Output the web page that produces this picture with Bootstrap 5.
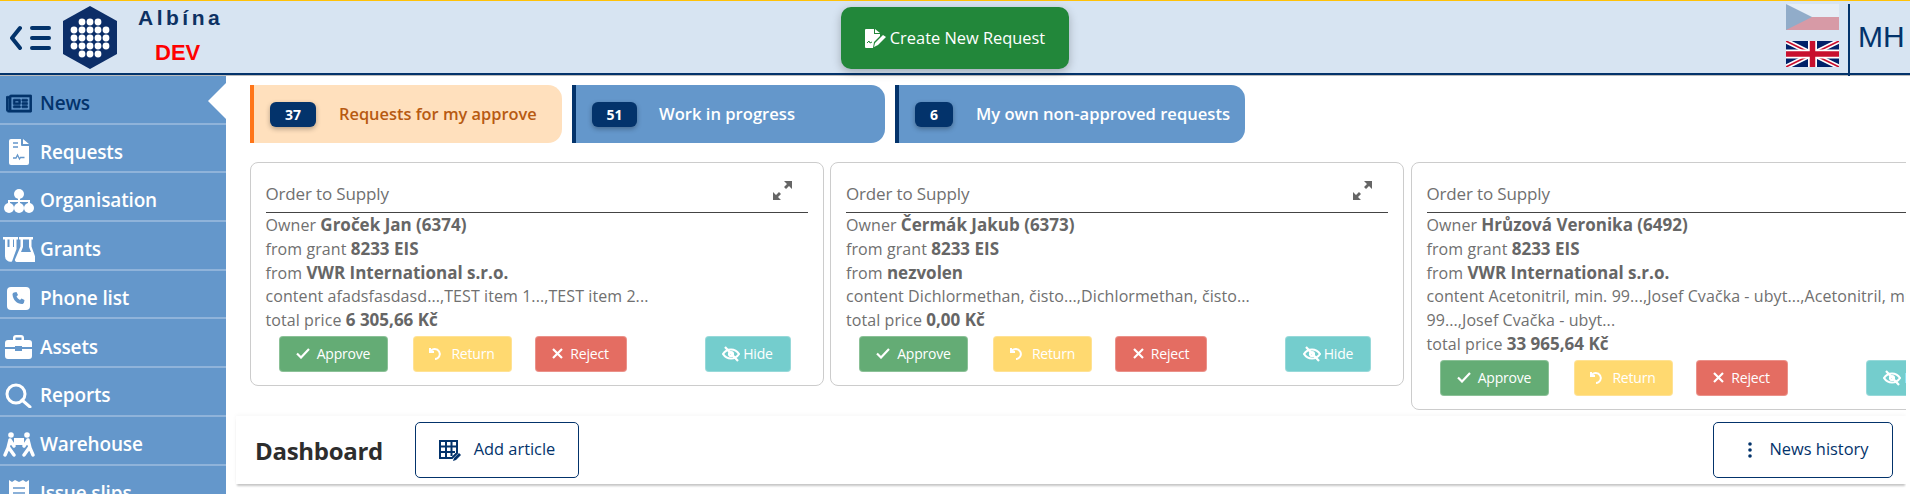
<!DOCTYPE html>
<html lang="en"><head><meta charset="utf-8"><title>Albina</title>
<link rel="stylesheet" href="https://cdn.jsdelivr.net/npm/bootstrap@5.3.0/dist/css/bootstrap.min.css">
<style>
html,body{height:494px;overflow:hidden;background:#fff}
body{font-family:"Open Sans","Noto Sans",sans-serif;font-size:16px;color:#707070}
.topbar{height:76px;background:#d7e4f2;border-top:1px solid #ffc107;border-bottom:1px solid #bbb;box-shadow:inset 0 -2px 0 #03336b;flex:none}
.leftzone{padding-left:10px}
.logo-hex{width:56px;height:64px;margin-left:11px;margin-top:-1px}
.burger{width:41px;height:26px}
.brand-wrap{margin-left:20px;width:100px;height:66px;margin-top:-4px}
.brand-name{font:700 21px/24px "Liberation Sans",sans-serif;letter-spacing:3.5px;color:#0d3163;margin-top:3px}
.brand-dev{font:700 22px/28px "Liberation Sans",sans-serif;color:#f00;padding-left:17px;margin-top:9px}
.create-btn{width:228px;height:62px;margin-left:603px;margin-top:-1px;padding-top:8px;background:#22873a;color:#fff;border-radius:10px;border:0;font-size:16.4px;letter-spacing:0;box-shadow:0 3px 10px rgba(0,0,0,.25)}
.create-btn:hover{background:#22873a;color:#fff}
.flags{width:53px;margin-right:9px;gap:11px;margin-top:3px}
.flags svg{display:block;width:53px;height:26px}
.flag-cz{opacity:.35}
.user-tag{width:62px;height:72px;border-left:2px solid #03336b;margin-top:3px;padding-left:8px;font:30px/65px "Liberation Sans",sans-serif;color:#03336b}
.sidebar{width:226px;background:#6497cb;flex:none}
.side-item{height:48.7px;border-bottom:2px solid #8fb3da;color:#fff;font-weight:600;font-size:19px;letter-spacing:-.15px;position:relative;padding-top:8px}
.side-item.is-on{color:#03336b}
.side-item.is-on::after{content:"";position:absolute;right:0;top:7px;border-style:solid;border-width:18px 18px 18px 0;border-color:transparent #fff transparent transparent}
.side-ico{width:40px;flex:none;display:flex;justify-content:center;padding-right:3px}
.main-area{width:1680px;flex:none;overflow:hidden}
.tabs-row{gap:10px;padding:9px 0 0 24px}
.tab-box{height:58px;border-left:4px solid #03336b;background:#6497cb;color:#fff;font-weight:600;font-size:16.6px;border-radius:0 14px 14px 0}
.tab-box.tab-a{width:312px;background:#ffe0bd;border-left-color:#ff7518;color:#b75a12;font-size:16.4px}
.tab-b{width:313px}.tab-c{width:350px}
.count-pill{width:46px;height:25px;margin:0 23px 0 16px;background:#03336b;color:#fff;border-radius:6px;font-size:14px;font-weight:700;box-shadow:0 2px 5px rgba(0,0,0,.3)}
.tab-b .count-pill{width:45px;margin-right:22px}
.tab-c .count-pill{width:38px;margin-right:23px}
.cards-row{gap:6.5px;padding:19px 0 0 23.5px;align-items:flex-start;width:1680px}
.order-box{width:574px;flex:none;background:#fff;border:1px solid #ccc;border-radius:8px;padding:15px 15px 13px;font-size:16px;line-height:23.8px;letter-spacing:.08px;position:relative}
.order-head{height:35px;border-bottom:1px solid #444;font-size:17px;padding-top:3px;line-height:26px;margin-bottom:1px;letter-spacing:-.15px}
.order-box b{color:#666;font-weight:700;font-size:17px;letter-spacing:0;line-height:1}
.btn-strip{margin:3px 17px 0 13px;height:36px}
.act{height:36px;border-radius:4px;color:#fff;font-size:14px;letter-spacing:-.2px;border:1px solid rgba(255,255,255,.25);gap:7px}
.act-ok{width:109px;background:#64ac75}.act-back{width:99px;background:#ffd970;margin-left:25px;gap:9px}.act-no{width:92px;background:#e46d62;margin-left:23px}.act-hide{width:86px;background:#74cdcd;margin-left:auto;gap:3px}
.dash-panel{height:68px;margin:6px 0 0 10px;padding:0 13px 0 19px;background:#fff;box-shadow:0 3px 2px -1px rgba(0,0,0,.22),0 -1px 4px rgba(0,0,0,.04)}
.dash-title{font-weight:700;font-size:24px;color:#2d2d2d;letter-spacing:-.3px;width:160px;padding-top:3px}
.line-btn{height:56px;background:#fff;border:1px solid #03336b;border-radius:5px;color:#03336b;font-size:16.4px}
.line-a{width:164px;gap:13px}.line-b{width:180px;gap:18px;padding-left:22px}
</style></head><body>
<header class="topbar d-flex align-items-center">
<div class="leftzone d-flex align-items-center">
<svg class="burger" viewBox="0 0 41 26" fill="none" stroke="#03336b" stroke-width="4" stroke-linecap="round" stroke-linejoin="round"><path d="M10 3 2 13l8 10M22 3h17M22 13h17M22 23h17" /></svg>
<svg class="logo-hex" viewBox="0 0 56 64"><polygon points="28,0 55,15 55,48 28,63 1,48 1,15" fill="#0c2e68"/><g fill="#fff"><circle cx="20" cy="16" r="3.4"/><circle cx="28" cy="16" r="3.4"/><circle cx="36" cy="16" r="3.4"/><circle cx="12" cy="24" r="3.4"/><circle cx="20" cy="24" r="3.4"/><circle cx="28" cy="24" r="3.4"/><circle cx="36" cy="24" r="3.4"/><circle cx="44" cy="24" r="3.4"/><circle cx="12" cy="32" r="3.4"/><circle cx="20" cy="32" r="3.4"/><circle cx="28" cy="32" r="3.4"/><circle cx="36" cy="32" r="3.4"/><circle cx="44" cy="32" r="3.4"/><circle cx="12" cy="40" r="3.4"/><circle cx="20" cy="40" r="3.4"/><circle cx="28" cy="40" r="3.4"/><circle cx="36" cy="40" r="3.4"/><circle cx="44" cy="40" r="3.4"/><circle cx="20" cy="48" r="3.4"/><circle cx="28" cy="48" r="3.4"/><circle cx="36" cy="48" r="3.4"/></g></svg>
<div class="brand-wrap"><div class="brand-name">Albína</div><div class="brand-dev">DEV</div></div>
<button class="btn create-btn d-flex align-items-center justify-content-center gap-1" type="button">
<svg width="21" height="20" viewBox="0 0 21 20"><path fill="#fff" d="M1 0h8v5h6v2l-6 6-1 6H1a1 1 0 0 1-1-1V1a1 1 0 0 1 1-1zM10 0l5 4h-5z"/><path fill="#fff" d="M9 18l1-4 8-8 3 2-8 8z"/><path fill="none" stroke="#22873a" d="M2 14l2-2 1 2 2-1"/></svg>
<span>Create New Request</span></button>
</div>
<div class="ms-auto d-flex align-items-start align-self-stretch">
<div class="flags d-flex flex-column">
<svg class="flag-cz" viewBox="0 0 53 26"><rect width="53" height="13" fill="#fff"/><rect y="13" width="53" height="13" fill="#d7141a"/><polygon points="0,0 26,13 0,26" fill="#11457e"/></svg>
<svg viewBox="0 0 53 26"><rect width="53" height="26" fill="#012169"/><path d="M0 0l53 26M53 0 0 26" stroke="#fff" stroke-width="5"/><path d="M0 0l53 26M53 0 0 26" stroke="#c8102e" stroke-width="1.6"/><path d="M26.500 0v26M0 13h53" stroke="#fff" stroke-width="9"/><path d="M26.500 0v26M0 13h53" stroke="#c8102e" stroke-width="5.500"/></svg>
</div>
<div class="user-tag">MH</div>
</div>
</header>
<div class="d-flex" style="height:418px">
<nav class="sidebar overflow-hidden">
<div class="side-item is-on d-flex align-items-center"><span class="side-ico"><svg width="26" height="23" viewBox="0 0 576 512"><path fill="#03336b" stroke="#03336b" stroke-width="14" d="M552 64H112c-20.858 0-38.643 13.377-45.248 32H24c-13.255 0-24 10.745-24 24v272c0 30.928 25.072 56 56 56h496c13.255 0 24-10.745 24-24V88c0-13.255-10.745-24-24-24zM48 392V144h16v248c0 4.411-3.589 8-8 8s-8-3.589-8-8zm480 8H111.410c.388-2.626.59-5.297.59-8V112h416v288zM172 280h136c6.627 0 12-5.373 12-12v-96c0-6.627-5.373-12-12-12H172c-6.627 0-12 5.373-12 12v96c0 6.627 5.373 12 12 12zm28-80h80v40h-80v-40zm-40 140v-24c0-6.627 5.373-12 12-12h136c6.627 0 12 5.373 12 12v24c0 6.627-5.373 12-12 12H172c-6.627 0-12-5.373-12-12zm192 0v-24c0-6.627 5.373-12 12-12h104c6.627 0 12 5.373 12 12v24c0 6.627-5.373 12-12 12H364c-6.627 0-12-5.373-12-12zm0-144v-24c0-6.627 5.373-12 12-12h104c6.627 0 12 5.373 12 12v24c0 6.627-5.373 12-12 12H364c-6.627 0-12-5.373-12-12zm0 72v-24c0-6.627 5.373-12 12-12h104c6.627 0 12 5.373 12 12v24c0 6.627-5.373 12-12 12H364c-6.627 0-12-5.373-12-12z"/></svg></span>News</div>
<div class="side-item d-flex align-items-center"><span class="side-ico"><svg width="20" height="26" viewBox="0 0 20 26"><path fill="#fff" d="M2 0h10v6a1 1 0 0 0 1 1h7v17a2 2 0 0 1-2 2H2a2 2 0 0 1-2-2V2a2 2 0 0 1 2-2zM14 0l6 5h-6z"/><path fill="none" stroke="#6497cb" stroke-width="1.300" d="M4 4h5M4 8h5M4 19h3l1.500-3 2 4 1-1.500h4"/></svg></span>Requests</div>
<div class="side-item d-flex align-items-center"><span class="side-ico"><svg width="30" height="24" viewBox="0 0 30 24"><circle cx="15" cy="5" r="5" fill="#fff"/><circle cx="5" cy="19" r="5" fill="#fff"/><circle cx="15" cy="19" r="5" fill="#fff"/><circle cx="25" cy="19" r="5" fill="#fff"/><path fill="none" stroke="#fff" stroke-width="2" d="M5 16v-4h20v4M15 8v8"/></svg></span>Organisation</div>
<div class="side-item d-flex align-items-center"><span class="side-ico"><svg width="32" height="25" viewBox="0 0 32 25"><path fill="#fff" d="M0 0h15v2.500h-1.500V12L9 24.500A5.500 5.500 0 0 1 2 19V2.500H0zM4.500 2.500V10h2V2.500zM10 2.500V10h1V2.500z"/><path fill="#fff" d="M16 0h14v2.500h-1.500v7L33 22a2 2 0 0 1-2 3H14a2 2 0 0 1-1.800-3l5.300-12.500v-7H16zM20 2.500V10l-2 5h10l-2-5V2.500z"/></svg></span>Grants</div>
<div class="side-item d-flex align-items-center"><span class="side-ico"><svg width="23" height="23" viewBox="0 0 23 23"><rect width="23" height="23" rx="4" fill="#fff"/><path fill="#6497cb" d="M7 5.500 9.500 5l1.500 3-1.500 1.500c.7 1.500 2 2.800 3.500 3.500l1.500-1.500 3 1.500-.5 2.500c-.2.8-1 1.500-2 1.500C10 17 6 13 5.500 7.500c0-1 .7-1.800 1.500-2z"/></svg></span>Phone list</div>
<div class="side-item d-flex align-items-center"><span class="side-ico"><svg width="27" height="24" viewBox="0 0 27 24"><path fill="#fff" d="M8 5V3a3 3 0 0 1 3-3h5a3 3 0 0 1 3 3v2h5a3 3 0 0 1 3 3v4H17v-1h-7v1H0V8a3 3 0 0 1 3-3zm2.500 0h6V2.500h-6zM0 14h10v2h7v-2h10v7a3 3 0 0 1-3 3H3a3 3 0 0 1-3-3z"/></svg></span>Assets</div>
<div class="side-item d-flex align-items-center"><span class="side-ico"><svg width="27" height="25" viewBox="0 0 27 25" fill="none" stroke="#fff" stroke-width="3"><circle cx="11" cy="11" r="9"/><path d="M17 17l8 7" stroke-linecap="round"/></svg></span>Reports</div>
<div class="side-item d-flex align-items-center"><span class="side-ico"><svg width="32" height="25" viewBox="0 0 32 25"><circle cx="8" cy="3" r="2.800" fill="#fff"/><circle cx="24" cy="3" r="2.800" fill="#fff"/><rect x="11" y="6" width="10" height="7" fill="#fff"/><path fill="none" stroke="#fff" stroke-width="3.400" stroke-linecap="round" stroke-linejoin="round" d="M7 8l-2 8-3 7M6 16l5 7M25 8l2 8 3 7M26 16l-5 7M7 8l4 6M25 8l-4 6"/></svg></span>Warehouse</div>
<div class="side-item d-flex align-items-center"><span class="side-ico"><svg width="20" height="26" viewBox="0 0 20 26"><path fill="#fff" d="M0 0l3 2 3-2 4 2 4-2 3 2 3-2v26H0z"/><path stroke="#6497cb" stroke-width="1.600" d="M4 8h12M4 13h12M4 18h12"/></svg></span>Issue slips</div>
</nav>
<main class="main-area">
<div class="tabs-row d-flex">
<div class="tab-box tab-a d-flex align-items-center"><span class="count-pill d-flex align-items-center justify-content-center">37</span>Requests for my approve</div>
<div class="tab-box tab-b d-flex align-items-center"><span class="count-pill d-flex align-items-center justify-content-center">51</span>Work in progress</div>
<div class="tab-box tab-c d-flex align-items-center"><span class="count-pill d-flex align-items-center justify-content-center">6</span>My own non-approved requests</div>
</div>
<div class="cards-row d-flex overflow-hidden">

<article class="order-box">
<div class="order-head d-flex justify-content-between"><span>Order to Supply</span><svg class="me-3" width="19" height="19" viewBox="0 0 19 19"><path fill="#666" d="M11 0h8v8l-3-3-3 3-2-2 3-3zM0 19v-8l3 3 3-3 2 2-3 3 3 3z"/></svg></div>
<div>Owner <b>Groček Jan (6374)</b></div><div>from grant <b>8233 EIS</b></div><div>from <b>VWR International s.r.o.</b></div><div>content afadsfasdasd...,TEST item 1...,TEST item 2...</div><div>total price <b>6 305,66 Kč</b></div>
<div class="btn-strip d-flex">
<div class="act act-ok d-flex align-items-center justify-content-center"><svg width="14" height="11" viewBox="0 0 14 11" fill="none" stroke="#fff" stroke-width="2.200"><path d="M1 5.500 5 9.500 13 1"/></svg>Approve</div>
<div class="act act-back d-flex align-items-center justify-content-center"><svg width="13" height="14" viewBox="0 0 13 14" fill="none" stroke="#fff" stroke-width="2"><path d="M1 1v4h4M1.500 4.500A5 5 0 1 1 6 12"/></svg>Return</div>
<div class="act act-no d-flex align-items-center justify-content-center"><svg width="11" height="11" viewBox="0 0 11 11" stroke="#fff" stroke-width="2.200"><path d="M1 1l9 9M10 1l-9 9"/></svg>Reject</div>
<div class="act act-hide d-flex align-items-center justify-content-center"><svg width="18" height="16" viewBox="0 0 18 16" fill="none" stroke="#fff" stroke-width="2.200"><path d="M1 8c4-6 12-6 16 0-4 6-12 6-16 0zM3 1l13 14"/><circle cx="9" cy="8" r="2"/></svg>Hide</div>
</div>
</article>

<article class="order-box">
<div class="order-head d-flex justify-content-between"><span>Order to Supply</span><svg class="me-3" width="19" height="19" viewBox="0 0 19 19"><path fill="#666" d="M11 0h8v8l-3-3-3 3-2-2 3-3zM0 19v-8l3 3 3-3 2 2-3 3 3 3z"/></svg></div>
<div>Owner <b>Čermák Jakub (6373)</b></div><div>from grant <b>8233 EIS</b></div><div>from <b>nezvolen</b></div><div>content Dichlormethan, čisto...,Dichlormethan, čisto...</div><div>total price <b>0,00 Kč</b></div>
<div class="btn-strip d-flex">
<div class="act act-ok d-flex align-items-center justify-content-center"><svg width="14" height="11" viewBox="0 0 14 11" fill="none" stroke="#fff" stroke-width="2.200"><path d="M1 5.500 5 9.500 13 1"/></svg>Approve</div>
<div class="act act-back d-flex align-items-center justify-content-center"><svg width="13" height="14" viewBox="0 0 13 14" fill="none" stroke="#fff" stroke-width="2"><path d="M1 1v4h4M1.500 4.500A5 5 0 1 1 6 12"/></svg>Return</div>
<div class="act act-no d-flex align-items-center justify-content-center"><svg width="11" height="11" viewBox="0 0 11 11" stroke="#fff" stroke-width="2.200"><path d="M1 1l9 9M10 1l-9 9"/></svg>Reject</div>
<div class="act act-hide d-flex align-items-center justify-content-center"><svg width="18" height="16" viewBox="0 0 18 16" fill="none" stroke="#fff" stroke-width="2.200"><path d="M1 8c4-6 12-6 16 0-4 6-12 6-16 0zM3 1l13 14"/><circle cx="9" cy="8" r="2"/></svg>Hide</div>
</div>
</article>

<article class="order-box">
<div class="order-head d-flex justify-content-between"><span>Order to Supply</span><svg class="me-3" width="19" height="19" viewBox="0 0 19 19"><path fill="#666" d="M11 0h8v8l-3-3-3 3-2-2 3-3zM0 19v-8l3 3 3-3 2 2-3 3 3 3z"/></svg></div>
<div>Owner <b>Hrůzová Veronika (6492)</b></div><div>from grant <b>8233 EIS</b></div><div>from <b>VWR International s.r.o.</b></div><div>content Acetonitril, min. 99...,Josef Cvačka - ubyt...,Acetonitril, min. 99...,Josef Cvačka - ubyt...</div><div>total price <b>33 965,64 Kč</b></div>
<div class="btn-strip d-flex">
<div class="act act-ok d-flex align-items-center justify-content-center"><svg width="14" height="11" viewBox="0 0 14 11" fill="none" stroke="#fff" stroke-width="2.200"><path d="M1 5.500 5 9.500 13 1"/></svg>Approve</div>
<div class="act act-back d-flex align-items-center justify-content-center"><svg width="13" height="14" viewBox="0 0 13 14" fill="none" stroke="#fff" stroke-width="2"><path d="M1 1v4h4M1.500 4.500A5 5 0 1 1 6 12"/></svg>Return</div>
<div class="act act-no d-flex align-items-center justify-content-center"><svg width="11" height="11" viewBox="0 0 11 11" stroke="#fff" stroke-width="2.200"><path d="M1 1l9 9M10 1l-9 9"/></svg>Reject</div>
<div class="act act-hide d-flex align-items-center justify-content-center"><svg width="18" height="16" viewBox="0 0 18 16" fill="none" stroke="#fff" stroke-width="2.200"><path d="M1 8c4-6 12-6 16 0-4 6-12 6-16 0zM3 1l13 14"/><circle cx="9" cy="8" r="2"/></svg>Hide</div>
</div>
</article>
</div>
<section class="dash-panel d-flex align-items-center">
<div class="dash-title">Dashboard</div>
<button class="btn line-btn line-a d-flex align-items-center justify-content-center" type="button"><svg width="22" height="22" viewBox="0 0 22 22"><path fill="none" stroke="#03336b" stroke-width="2" d="M1 2h17v12l-5 5H1zM1 7.500h17M1 13h15M7 2v17M12.500 2v15"/><path fill="#03336b" d="M14 22l1-3 5-5 2 2-5 5z"/></svg>Add article</button>
<button class="btn line-btn line-b ms-auto d-flex align-items-center justify-content-center" type="button"><svg width="4" height="16" viewBox="0 0 4 16" fill="#03336b"><circle cx="2" cy="2" r="1.800"/><circle cx="2" cy="8" r="1.800"/><circle cx="2" cy="14" r="1.800"/></svg>News history</button>
</section>
</main>
</div>
<script src="https://cdn.jsdelivr.net/npm/bootstrap@5.3.0/dist/js/bootstrap.bundle.min.js"></script>
</body></html>
